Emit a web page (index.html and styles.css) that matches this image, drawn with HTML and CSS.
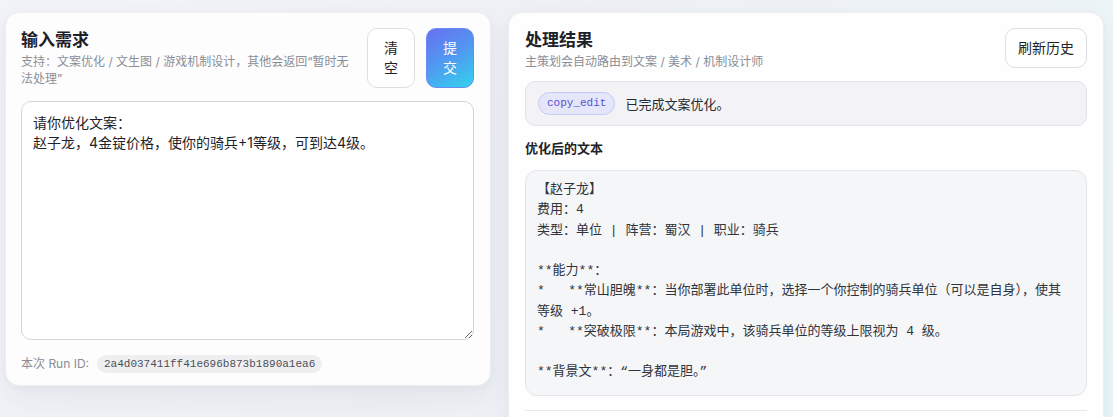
FILE: index.html
```html
<!DOCTYPE html>
<html lang="zh-CN">
<head>
<meta charset="utf-8">
<title>处理台</title>
<link rel="stylesheet" href="styles.css">
</head>
<body>
<div class="page">
  <section class="card card-input">
    <div class="card-head">
      <div class="head-text">
        <h2 class="title">输入需求</h2>
        <p class="subtitle">支持：文案优化 / 文生图 / 游戏机制设计，其他会返回“暂时无法处理”</p>
      </div>
      <div class="actions">
        <button class="btn btn-ghost btn-stack">清空</button>
        <button class="btn btn-primary btn-stack">提交</button>
      </div>
    </div>
    <textarea class="input">请你优化文案：
赵子龙，4金锭价格，使你的骑兵+1等级，可到达4级。</textarea>
    <div class="run-row">
      <span class="run-label">本次 Run ID:</span>
      <code class="run-id">2a4d037411ff41e696b873b1890a1ea6</code>
    </div>
  </section>

  <section class="card card-result">
    <div class="card-head">
      <div class="head-text">
        <h2 class="title">处理结果</h2>
        <p class="subtitle">主策划会自动路由到文案 / 美术 / 机制设计师</p>
      </div>
      <button class="btn btn-ghost btn-wide">刷新历史</button>
    </div>
    <div class="status">
      <span class="tag">copy_edit</span>
      <span class="status-text">已完成文案优化。</span>
    </div>
    <h3 class="section-label">优化后的文本</h3>
    <pre class="output">【赵子龙】
费用：4
类型：单位 | 阵营：蜀汉 | 职业：骑兵

**能力**：
*   **常山胆魄**：当你部署此单位时，选择一个你控制的骑兵单位（可以是自身），使其等级 +1。
*   **突破极限**：本局游戏中，该骑兵单位的等级上限视为 4 级。

**背景文**：“一身都是胆。”</pre>
    <div class="divider"></div>
    <div class="history-space"></div>
  </section>
</div>
</body>
</html>
```

FILE: styles.css
```css
* { box-sizing: border-box; }

html, body { height: 100%; }

body {
  margin: 0;
  font-family: "Inter", "Noto Sans CJK SC", sans-serif;
  color: #1f2329;
  background: linear-gradient(120deg, #f2f3f8 0%, #eef0f5 45%, #edf3f6 75%, #eaf6f8 100%);
  overflow: hidden;
}

.page {
  display: grid;
  grid-template-columns: 486px 596px;
  column-gap: 17px;
  align-items: start;
  padding: 12px 0 0 5px;
}

.card {
  background: #fdfdfd;
  border: 1px solid #eceef2;
  border-radius: 14px;
  box-shadow: 0 12px 28px rgba(40, 50, 90, 0.06), 0 2px 6px rgba(40, 50, 90, 0.03);
}

.card-input {
  padding: 15px 16px 12px 15px;
}

.card-result {
  padding: 15px 16px 16px;
  background: #fefefe;
}

.card-head {
  display: flex;
  align-items: flex-start;
  gap: 12px;
}

.head-text {
  flex: 1;
  min-width: 0;
}

.title {
  margin: 0;
  font-size: 17px;
  line-height: 24px;
  font-weight: 700;
  color: #1d2129;
}

.subtitle {
  margin: 1px 0 0;
  font-size: 12px;
  line-height: 17px;
  color: #8a8e97;
}

.actions {
  display: flex;
  gap: 11px;
}

.btn {
  font-family: "Inter", "Noto Sans CJK SC", sans-serif;
  font-size: 14px;
  line-height: 20px;
  border-radius: 10px;
  cursor: pointer;
}

.btn-ghost {
  background: #ffffff;
  border: 1px solid #dedfe4;
  color: #1f2329;
}

.btn-primary {
  background: linear-gradient(150deg, #6a6ff2 0%, #4f9af0 50%, #33d3ee 100%);
  border: 1px solid #6a8cf0;
  color: #ffffff;
}

.btn-stack {
  width: 48px;
  padding: 9px 16px;
}

.btn-wide {
  padding: 9px 12px;
  white-space: nowrap;
}

.input {
  display: block;
  width: 100%;
  height: 239px;
  margin-top: 13px;
  padding: 11px 11px;
  border: 1px solid #d3d5db;
  border-radius: 10px;
  background: #ffffff;
  font-family: "Inter", "Noto Sans CJK SC", sans-serif;
  font-size: 14px;
  line-height: 20px;
  color: #1f2329;
  outline: none;
}

.run-row {
  display: flex;
  align-items: center;
  gap: 8px;
  margin-top: 15px;
}

.run-label {
  font-size: 12px;
  line-height: 18px;
  color: #8a8e97;
}

.run-id {
  font-family: "Liberation Mono", monospace;
  font-size: 11px;
  line-height: 18px;
  padding: 0 7px;
  border-radius: 9px;
  background: #efeff2;
  color: #4b5059;
}

.status {
  display: flex;
  align-items: center;
  gap: 10px;
  margin-top: 11px;
  padding: 10px 12px;
  background: #f3f3f6;
  border: 1px solid #e3e4ea;
  border-radius: 10px;
}

.tag {
  font-family: "Liberation Mono", monospace;
  font-size: 11px;
  line-height: 21px;
  padding: 0 8px;
  border-radius: 12px;
  background: #e6e6fb;
  border: 1px solid #c9c7f3;
  color: #5552cf;
}

.status-text {
  font-size: 13px;
  line-height: 20px;
  color: #262b33;
}

.section-label {
  margin: 12px 0;
  font-size: 13px;
  line-height: 20px;
  font-weight: 700;
  color: #1f2329;
}

.output {
  margin: 0;
  padding: 9px 15px 12px 11px;
  background: #f5f6f8;
  border: 1px solid #e3e5ea;
  border-radius: 12px;
  font-family: "Liberation Mono", "Noto Sans CJK SC", monospace;
  font-size: 13px;
  line-height: 20.25px;
  color: #2f343c;
  white-space: pre-wrap;
  word-break: break-all;
}

.divider {
  margin-top: 14px;
  border-top: 1px solid #e8e9ee;
}

.history-space {
  height: 60px;
}
```
